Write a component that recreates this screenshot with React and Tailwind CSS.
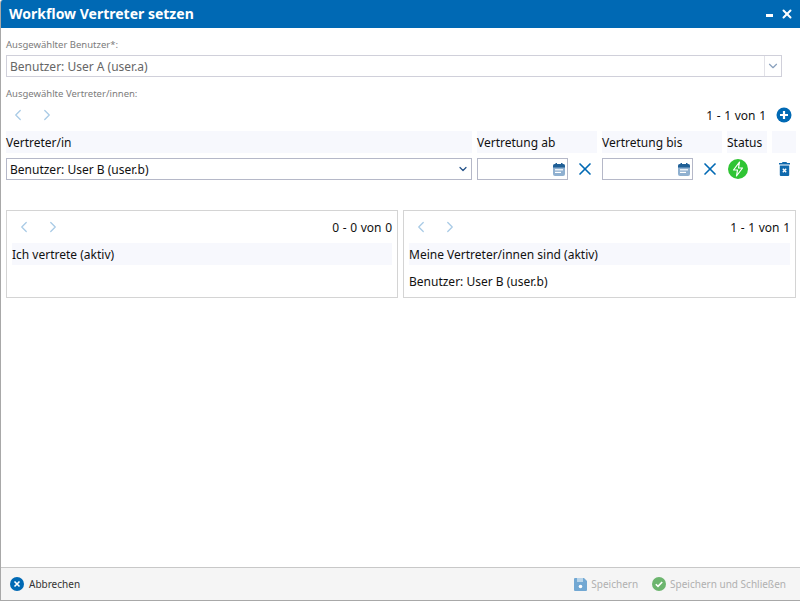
import React from "react";
import { ChevronLeft, ChevronRight, ChevronDown, X } from "lucide-react";

const F = { fontFamily: '"Noto Sans", sans-serif' };

function Nav() {
  return (
    <>
      <ChevronLeft size={18} strokeWidth={1.7} className="text-[#a9cbe6] ml-[3px]" />
      <ChevronRight size={18} strokeWidth={1.7} className="text-[#a9cbe6] ml-[11px]" />
    </>
  );
}

function Pager({ text }) {
  return (
    <div className="flex items-center h-[16px]">
      <Nav />
      <span className="ml-auto pt-[1px] text-[12px] leading-4 text-[#111] [word-spacing:0.5px]">{text}</span>
    </div>
  );
}

function Cal() {
  return (
    <svg width="12" height="13" viewBox="0 0 12 13" className="ml-auto mr-[2px]">
      <rect x="0" y="1" width="12" height="12" rx="2" fill="#8fb0d0" />
      <path d="M0 4.5V3a2 2 0 0 1 2-2h8a2 2 0 0 1 2 2v1.5z" fill="#1f5f96" />
      <rect x="2.5" y="0" width="1.5" height="2" fill="#1f5f96" />
      <rect x="8" y="0" width="1.5" height="2" fill="#1f5f96" />
      <rect x="2" y="6.2" width="8" height="1.2" fill="#fff" />
      <rect x="2" y="8.8" width="6" height="1.2" fill="#fff" />
    </svg>
  );
}

function DateCell() {
  return (
    <div className="flex items-center gap-[7px] w-[120px]">
      <div className="w-[91px] h-[22px] border border-[#b5b8c8] flex items-center">
        <Cal />
      </div>
      <X size={20} strokeWidth={2} className="text-[#0069b4]" />
    </div>
  );
}

function Th({ w, children }) {
  return (
    <div className={"h-[22px] pt-[1px] bg-[#f7f8fd] flex items-center text-[12px] text-[#111] " + w}>{children}</div>
  );
}

export default function App() {
  return (
    <div style={F} className="w-[800px] h-[601px] flex flex-col bg-white border-l border-b border-[#a8a8a8] rounded-tl-[3px] overflow-hidden">
      <header className="h-[28px] shrink-0 bg-[#0069b4] flex items-center pl-[8px] pr-[6px] text-white">
        <h1 className="text-[14px] font-bold leading-none">Workflow Vertreter setzen</h1>
        <svg width="7" height="3" viewBox="0 0 7 3" className="ml-auto mt-[3px]"><rect width="7" height="3" fill="#fff" /></svg>
        <X size={14} strokeWidth={3.4} className="ml-[7px]" />
      </header>

      <main className="flex-1 pl-[5px] pr-[4px] flex flex-col">
        <label className="mt-[10px] h-[13px] text-[9.5px] leading-[13px] text-[#7b7b7b]">Ausgewählter Benutzer*:</label>
        <div className="mt-[4px] w-[776px] h-[22px] border border-[#d0d0da] flex items-center">
          <span className="pl-[3px] pt-[1px] text-[12px] text-[#666]">Benutzer: User A (user.a)</span>
          <div className="ml-auto w-[17px] h-full border-l border-[#e2e2e8] flex items-center justify-center">
            <ChevronDown size={14} strokeWidth={2} className="text-[#8aa1bd]" />
          </div>
        </div>
        <label className="mt-[10px] h-[13px] text-[9.5px] leading-[13px] text-[#7b7b7b]">Ausgewählte Vertreter/innen:</label>

        <div className="mt-[7px] h-[16px] flex items-center pr-[4px]">
          <Nav />
          <span className="ml-auto pt-[1px] text-[12px] text-[#111] [word-spacing:0.5px]">1 - 1 von 1</span>
          <svg width="16" height="16" viewBox="0 0 16 16" className="ml-[10px]">
            <circle cx="8" cy="8" r="7.5" fill="#0069b4" />
            <path d="M8 4v8M4 8h8" stroke="#fff" strokeWidth="2.2" />
          </svg>
        </div>

        <div className="mt-[8px] flex gap-[5px]">
          <Th w="w-[466px]">Vertreter/in</Th>
          <Th w="w-[120px]">Vertretung ab</Th>
          <Th w="w-[120px]">Vertretung bis</Th>
          <Th w="w-[40px]">Status</Th>
          <Th w="w-[24px]" />
        </div>

        <div className="mt-[5px] flex gap-[5px] items-center">
          <div className="w-[466px] h-[22px] border border-[#b5b8c8] flex items-center pl-[3px] pr-[2px] text-[12px] text-[#111]">
            <span className="pt-[1px]">Benutzer: User B (user.b)</span>
            <ChevronDown size={12} strokeWidth={2.4} className="ml-auto text-[#1f4e86]" />
          </div>
          <DateCell />
          <DateCell />
          <div className="w-[40px] flex">
            <svg width="20" height="20" viewBox="0 0 20 20" className="ml-[1px]">
              <circle cx="10" cy="10" r="10" fill="#2fc433" />
              <path d="M11.5 3 5.5 11H9.5l-1 6 6-8H10.5z" fill="none" stroke="#fff" strokeWidth="1.2" strokeLinejoin="round" />
            </svg>
          </div>
          <div className="w-[24px] flex justify-center">
            <svg width="11" height="14" viewBox="0 0 11 14">
              <path d="M3.5 0h4l.5 1h3v1.5H0V1h3z" fill="#0f69ad" />
              <path d="M.8 3.5h9.4V13a1 1 0 0 1-1 1H1.8a1 1 0 0 1-1-1z" fill="#0f69ad" />
              <path d="M3.8 6.8l3.4 3.4M7.2 6.8l-3.4 3.4" stroke="#fff" strokeWidth="1.4" />
            </svg>
          </div>
        </div>

        <div className="mt-[30px] flex gap-[5px]">
          <section className="w-[392px] h-[88px] border border-[#d4d4d4] px-[5px] pt-[8px]">
            <Pager text="0 - 0 von 0" />
            <div className="mt-[8px] h-[22px] pt-[1px] bg-[#f7f8fd] flex items-center text-[12px] text-[#111]">Ich vertrete (aktiv)</div>
          </section>
          <section className="w-[393px] h-[88px] border border-[#d4d4d4] px-[5px] pt-[8px]">
            <Pager text="1 - 1 von 1" />
            <div className="mt-[8px] h-[22px] pt-[1px] bg-[#f7f8fd] flex items-center text-[12px] text-[#111]">Meine Vertreter/innen sind (aktiv)</div>
            <div className="mt-[6px] h-[22px] flex items-center text-[12px] text-[#111]">Benutzer: User B (user.b)</div>
          </section>
        </div>
      </main>

      <footer className="h-[33px] shrink-0 bg-[#f5f5f5] border-t border-[#c8c8c8] flex items-center pl-[9px] pr-[14px] text-[10px]">
        <svg width="14" height="14" viewBox="0 0 14 14">
          <circle cx="7" cy="7" r="7" fill="#0069b4" />
          <path d="M4.5 4.5l5 5M9.5 4.5l-5 5" stroke="#fff" strokeWidth="1.6" />
        </svg>
        <span className="ml-[5px] pt-[1px] text-[#333]">Abbrechen</span>
        <svg width="13" height="13" viewBox="0 0 13 13" className="ml-auto">
          <path d="M1 0h9l3 3v9a1 1 0 0 1-1 1H1a1 1 0 0 1-1-1V1a1 1 0 0 1 1-1z" fill="#72a8d3" />
          <rect x="3" y="0" width="6" height="4" fill="#b9d5ea" />
          <circle cx="6.5" cy="8.5" r="1.8" fill="#fff" />
        </svg>
        <span className="ml-[4px] pt-[1px] text-[#b0b0b0]">Speichern</span>
        <svg width="14" height="14" viewBox="0 0 14 14" className="ml-[14px]">
          <circle cx="7" cy="7" r="7" fill="#6cb56e" />
          <path d="M3.8 7.2l2.2 2.2 4.2-4.4" fill="none" stroke="#fff" strokeWidth="1.6" />
        </svg>
        <span className="ml-[4px] pt-[1px] text-[#b0b0b0]">Speichern und Schließen</span>
      </footer>
    </div>
  );
}
